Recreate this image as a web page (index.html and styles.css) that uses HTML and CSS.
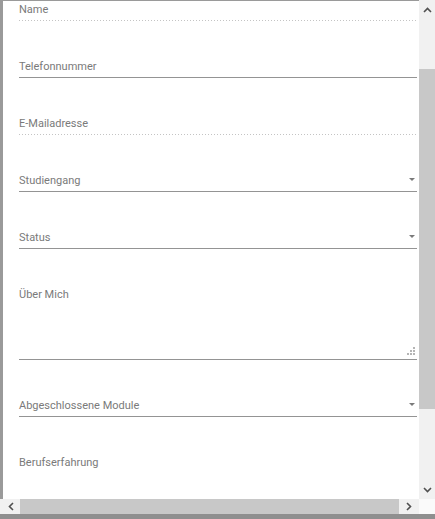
FILE: index.html
```html
<!DOCTYPE html>
<html lang="de">
<head>
<meta charset="utf-8">
<title>Formular</title>
<link rel="stylesheet" href="styles.css">
</head>
<body>
<div class="window">
  <div class="viewport">
    <form class="form">
      <div class="field disabled"><span class="label">Name</span><span class="line"></span></div>
      <div class="field"><span class="label">Telefonnummer</span><span class="line"></span></div>
      <div class="field disabled"><span class="label">E-Mailadresse</span><span class="line"></span></div>
      <div class="field select"><span class="label">Studiengang</span><span class="caret"></span><span class="line"></span></div>
      <div class="field select"><span class="label">Status</span><span class="caret"></span><span class="line"></span></div>
      <div class="field textarea"><span class="label">Über Mich</span>
        <span class="grip"><svg width="8" height="8" viewBox="0 0 8 8"><rect x="6" y="0" width="2" height="2"/><rect x="3" y="3" width="2" height="2"/><rect x="6" y="3" width="2" height="2"/><rect x="0" y="6" width="2" height="2"/><rect x="3" y="6" width="2" height="2"/><rect x="6" y="6" width="2" height="2"/></svg></span>
        <span class="line"></span></div>
      <div class="field select"><span class="label">Abgeschlossene Module</span><span class="caret"></span><span class="line"></span></div>
      <div class="field textarea"><span class="label">Berufserfahrung</span><span class="line"></span></div>
    </form>
  </div>
  <div class="vbar">
    <span class="arrow"><svg width="9" height="6" viewBox="0 0 9 6"><path d="M1 5 L4.5 1.5 L8 5" fill="none" stroke="#505050" stroke-width="1.6"/></svg></span>
    <span class="vtrack"><span class="vthumb"></span></span>
    <span class="arrow"><svg width="9" height="6" viewBox="0 0 9 6"><path d="M1 1 L4.5 4.5 L8 1" fill="none" stroke="#505050" stroke-width="1.6"/></svg></span>
  </div>
  <div class="hbar">
    <span class="arrow"><svg width="6" height="9" viewBox="0 0 6 9"><path d="M5 1 L1.5 4.5 L5 8" fill="none" stroke="#505050" stroke-width="1.6"/></svg></span>
    <span class="hthumb"></span>
    <span class="arrow"><svg width="6" height="9" viewBox="0 0 6 9"><path d="M1 1 L4.5 4.5 L1 8" fill="none" stroke="#505050" stroke-width="1.6"/></svg></span>
  </div>
  <div class="corner"></div>
</div>
</body>
</html>
```

FILE: styles.css
```css
* { box-sizing: border-box; }
html, body { margin: 0; padding: 0; }
body {
  width: 435px;
  height: 519px;
  background: #8f8f8f;
  overflow: hidden;
  font-family: Roboto, "Liberation Sans", Arial, sans-serif;
}
.window {
  width: 435px;
  height: 514px;
  display: grid;
  grid-template-columns: 3px 416px 16px;
  grid-template-rows: 499px 15px;
  background: #9a9a9a;
}
.viewport {
  grid-column: 2;
  grid-row: 1;
  background: #fff;
  border-top: 1px solid #9a9a9a;
  overflow: hidden;
}
.form {
  display: flex;
  flex-direction: column;
  margin-top: -37px;
  padding-left: 16px;
  padding-right: 2px;
}
.field {
  position: relative;
  display: flex;
  flex-direction: column;
  flex-shrink: 0;
  height: 57px;
  padding-top: 38px;
}
.label {
  font-size: 11px;
  line-height: 16px;
  color: #7a7a7a;
  height: 16px;
  white-space: nowrap;
}
.line {
  margin-top: auto;
  height: 1px;
  background: #949494;
}
.disabled .line {
  background: none;
  background-image: linear-gradient(to right, #c4c4c4 0, #c4c4c4 33%, transparent 0);
  background-size: 3px 1px;
  background-repeat: repeat-x;
}
.caret {
  position: absolute;
  right: 2px;
  top: 43px;
  width: 0;
  height: 0;
  border-left: 3px solid transparent;
  border-right: 3px solid transparent;
  border-top: 3px solid #7a7a7a;
}
.textarea { height: 111px; }
.grip {
  position: absolute;
  right: 2px;
  bottom: 5px;
  width: 8px;
  height: 8px;
  line-height: 0;
}
.grip svg { fill: #b5b5b5; }
.vbar {
  grid-column: 3;
  grid-row: 1;
  display: flex;
  flex-direction: column;
  background: #f1f1f1;
}
.vbar .arrow {
  height: 19px;
  display: flex;
  align-items: center;
  justify-content: center;
}
.vtrack {
  flex: 1;
  display: flex;
  flex-direction: column;
  padding-top: 50px;
  padding-bottom: 71px;
}
.vthumb {
  flex: 1;
  background: #c8c8c8;
}
.hbar {
  grid-column: 1 / 3;
  grid-row: 2;
  display: flex;
  background: #f1f1f1;
}
.hbar .arrow {
  width: 20px;
  display: flex;
  align-items: center;
  justify-content: center;
}
.hbar .arrow:first-child { width: 20px; padding-left: 1px; }
.hthumb {
  flex: 1;
  background: #c8c8c8;
}
.corner {
  grid-column: 3;
  grid-row: 2;
  background: #fafafa;
}
```
